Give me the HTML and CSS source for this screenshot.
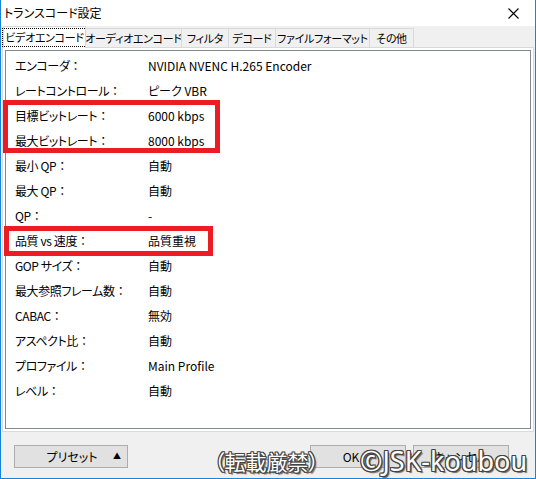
FILE: index.html
```html
<!DOCTYPE html>
<html lang="ja">
<head>
<meta charset="utf-8">
<title>トランスコード設定</title>
<link rel="stylesheet" href="styles.css">
</head>
<body>
<div class="window">
  <div class="titlebar">
    <span class="title">トランスコード設定</span>
    <svg class="close" width="11" height="11" viewBox="0 0 11 11"><path d="M0.5 0.5 L10.5 10.5 M10.5 0.5 L0.5 10.5" stroke="#000" stroke-width="1.1" fill="none"/></svg>
  </div>
  <div class="tabs">
    <div class="tab tab-video active"><span class="focus">ビデオエンコード</span></div>
    <div class="tab tab-audio">オーディオエンコード</div>
    <div class="tab tab-filter">フィルタ</div>
    <div class="tab tab-decode">デコード</div>
    <div class="tab tab-format">ファイルフォーマット</div>
    <div class="tab tab-other">その他</div>
  </div>
  <div class="panel">
    <div class="list">
      <div class="row"><span class="label">エンコーダ<span class="colon">：</span></span><span class="value">NVIDIA NVENC H.265 Encoder</span></div>
      <div class="row"><span class="label">レートコントロール<span class="colon">：</span></span><span class="value">ピーク VBR</span></div>
      <div class="row"><span class="label">目標ビットレート<span class="colon">：</span></span><span class="value">6000 kbps</span></div>
      <div class="row"><span class="label">最大ビットレート<span class="colon">：</span></span><span class="value">8000 kbps</span></div>
      <div class="row"><span class="label">最小 QP<span class="colon">：</span></span><span class="value">自動</span></div>
      <div class="row"><span class="label">最大 QP<span class="colon">：</span></span><span class="value">自動</span></div>
      <div class="row"><span class="label">QP<span class="colon">：</span></span><span class="value">-</span></div>
      <div class="row"><span class="label">品質 vs 速度<span class="colon">：</span></span><span class="value">品質重視</span></div>
      <div class="row"><span class="label">GOP サイズ<span class="colon">：</span></span><span class="value">自動</span></div>
      <div class="row"><span class="label">最大参照フレーム数<span class="colon">：</span></span><span class="value">自動</span></div>
      <div class="row"><span class="label">CABAC<span class="colon">：</span></span><span class="value">無効</span></div>
      <div class="row"><span class="label">アスペクト比<span class="colon">：</span></span><span class="value">自動</span></div>
      <div class="row"><span class="label">プロファイル<span class="colon">：</span></span><span class="value">Main Profile</span></div>
      <div class="row"><span class="label">レベル<span class="colon">：</span></span><span class="value">自動</span></div>
    </div>
  </div>
  <div class="buttons">
    <button class="btn btn-preset"><span>プリセット</span><span class="arrow">▲</span></button>
    <div class="spacer"></div>
    <button class="btn btn-ok">OK</button>
    <button class="btn btn-cancel">キャンセル</button>
  </div>
  <div class="mark mark-1"></div>
  <div class="mark mark-2"></div>
  <div class="watermark wm-1">（転載厳禁）</div>
  <div class="watermark wm-2">©JSK-koubou</div>
</div>
</body>
</html>
```
FILE: styles.css
```css
html, body {
  margin: 0;
  padding: 0;
  background: #f0f0f0;
}
.window {
  position: relative;
  width: 536px;
  height: 479px;
  box-sizing: border-box;
  border: 1px solid #1883d7;
  border-top: none;
  background: #f0f0f0;
  font-family: "Noto Sans CJK JP", "Noto Sans", sans-serif;
  font-feature-settings: "palt";
  font-size: 12px;
  color: #000;
  overflow: hidden;
}
.titlebar {
  height: 26px;
  background: #fff;
  display: flex;
  align-items: center;
  padding-left: 3px;
  padding-right: 16px;
}
.title {
  flex: 1;
  line-height: 16px;
  margin-top: -1px;
}
.close {
  display: block;
  margin-top: 1px;
}
.tabs {
  display: flex;
  align-items: flex-end;
  height: 21px;
  padding-left: 2px;
  position: relative;
  z-index: 2;
}
.tab {
  box-sizing: border-box;
  height: 19px;
  border: 1px solid #d9d9d9;
  border-bottom: none;
  border-left: none;
  background: #f0f0f0;
  display: flex;
  align-items: center;
  justify-content: center;
  font-size: 11px;
  line-height: 14px;
  white-space: nowrap;
  letter-spacing: -0.3px;
  overflow: hidden;
}
.tab.active {
  height: 22px;
  margin-bottom: -1px;
  background: #fff;
  border-left: 1px solid #d9d9d9;
  overflow: visible;
}
.focus {
  outline: 1px dotted #000;
  outline-offset: 0;
  padding: 1px 2px;
  line-height: 15px;
}
.tab-video { width: 83px; }
.tab-audio { width: 96px; }
.tab-filter { width: 47px; }
.tab-decode { width: 47px; }
.tab-format { width: 94px; }
.tab-other { width: 44px; }
.panel {
  box-sizing: border-box;
  height: 385px;
  margin: 0 1px 0 1px;
  border: 1px solid #d9d9d9;
  background: #fff;
  padding: 2px 2px 2px 2px;
}
.list {
  box-sizing: border-box;
  height: 379px;
  border: 1px solid #828790;
  background: #fff;
  padding-top: 2px;
  padding-left: 9px;
}
.row {
  display: flex;
  height: 25px;
  align-items: center;
  line-height: 16px;
}
.label {
  width: 133px;
  flex: none;
  letter-spacing: -0.4px;
}
.colon {
  font-feature-settings: normal;
  letter-spacing: 0;
}
.buttons {
  display: flex;
  align-items: flex-start;
  padding: 13px 26px 0 13px;
  gap: 7px;
}
.spacer {
  flex: 1;
}
.btn {
  box-sizing: border-box;
  height: 23px;
  margin: 0;
  border: 1px solid #adadad;
  background: #e1e1e1;
  font-family: "Noto Sans CJK JP", "Noto Sans", sans-serif;
  font-feature-settings: "palt";
  font-size: 12px;
  color: #000;
  padding: 0;
  display: flex;
  align-items: center;
  justify-content: center;
}
.btn-preset {
  width: 114px;
  position: relative;
  padding-left: 2px;
}
.btn-preset .arrow {
  position: absolute;
  right: 6px;
  top: 5px;
  font-size: 8px;
  line-height: 10px;
}
.btn-ok, .btn-cancel {
  width: 96px;
}
.btn-ok {
  padding-right: 14px;
}
.mark {
  position: absolute;
  border: 5px solid #ec1c24;
  box-sizing: border-box;
}
.mark-1 {
  left: 2px;
  top: 100px;
  width: 217px;
  height: 53px;
}
.mark-2 {
  left: 3px;
  top: 226px;
  width: 209px;
  height: 30px;
}
.watermark {
  position: absolute;
  color: #fff;
  white-space: nowrap;
  text-shadow:
    1px 1px 0 #444, -1px -1px 0 #444, 1px -1px 0 #444, -1px 1px 0 #444,
    0 1px 0 #444, 0 -1px 0 #444, 1px 0 0 #444, -1px 0 0 #444,
    2px 2px 1px #666;
}
.wm-1 {
  left: 213px;
  top: 446px;
  font-family: "Noto Sans CJK JP", sans-serif;
  font-feature-settings: "palt";
  font-size: 21px;
  line-height: 30px;
}
.wm-2 {
  left: 359px;
  top: 443px;
  font-family: "Noto Sans", "DejaVu Sans", sans-serif;
  font-size: 27px;
  line-height: 36px;
}
```
